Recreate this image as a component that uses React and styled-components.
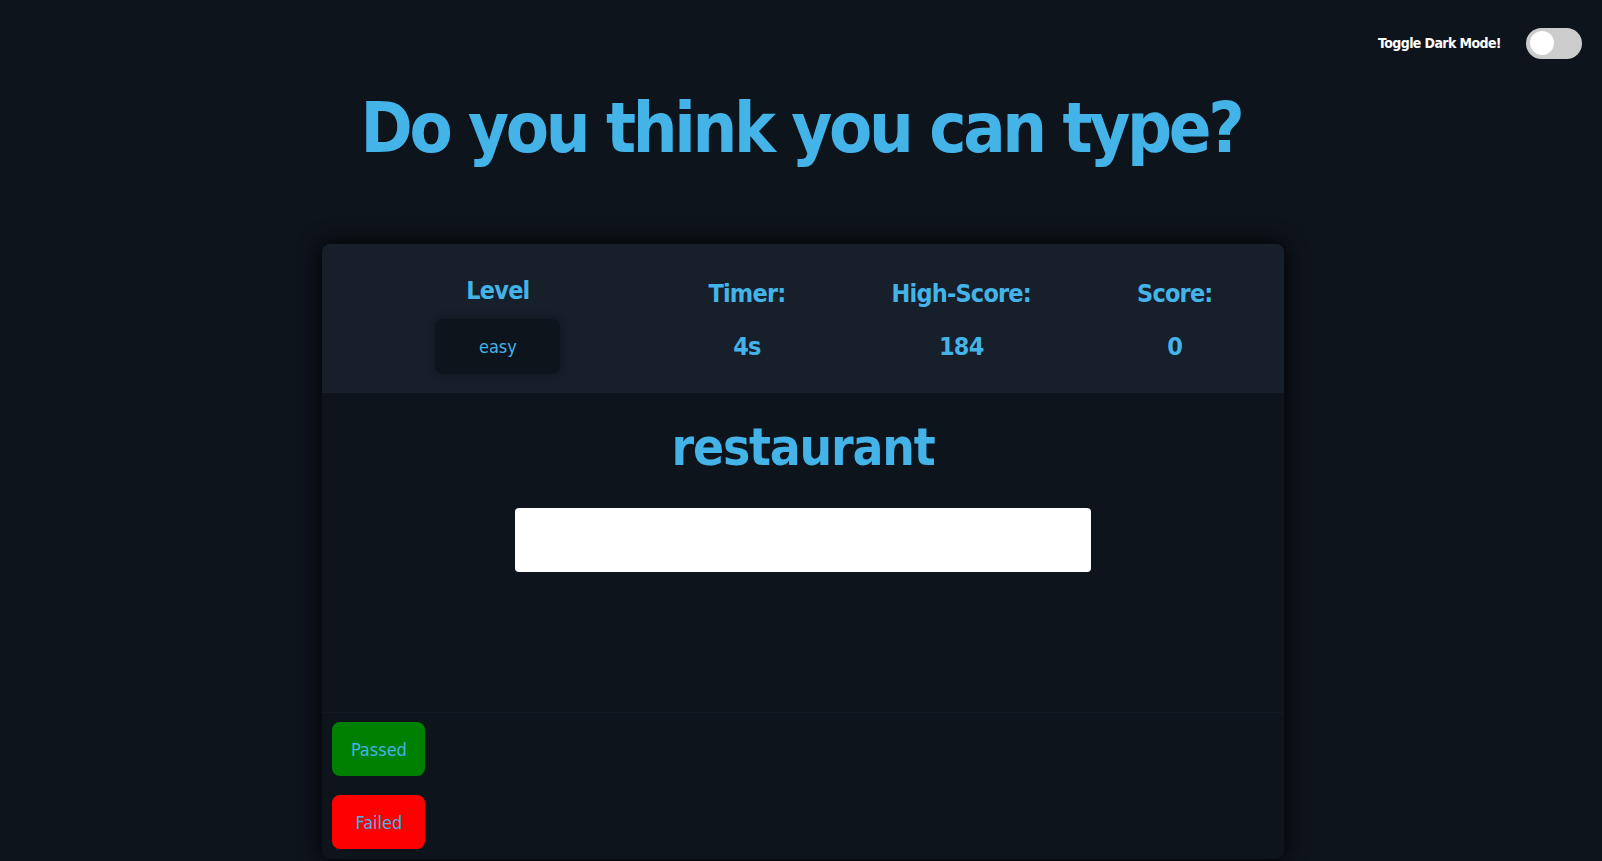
import React, { useState } from 'react'
import styled, { createGlobalStyle } from 'styled-components';

const GlobalStyle = createGlobalStyle`
    body {
        margin: 0;
        background: #0e141c;
        font-family: 'DejaVu Sans Condensed', 'DejaVu Sans', sans-serif;
    }
`

const Page = styled.div`
    min-height: 861px;
    padding-top: 27px;
    box-sizing: border-box;
`

const TopBar = styled.div`
    display: flex;
    justify-content: flex-end;
    align-items: center;
    gap: 25px;
    height: 32px;
    padding-right: 20px;
    span {
        color: #fff;
        font-weight: bold;
        font-size: 14px;
        letter-spacing: -0.6px;
    }
`

const Switch = styled.button`
    width: 56px;
    height: 31px;
    border: none;
    border-radius: 16px;
    background: #cccccc;
    padding: 0 4px;
    display: flex;
    align-items: center;
    justify-content: ${props => (props.on ? 'flex-end' : 'flex-start')};
    cursor: pointer;
    &::before {
        content: '';
        width: 24px;
        height: 24px;
        border-radius: 50%;
        background: #fff;
    }
`

const Title = styled.h1`
    margin: 29px 0 0;
    text-align: center;
    color: #43b3e8;
    font-size: 70px;
    line-height: 80px;
    font-weight: bold;
    letter-spacing: -3.3px;
`

const Card = styled.div`
    width: 60%;
    margin: 76px 0 0 calc(20% + 2px);
    border-radius: 8px;
    overflow: hidden;
    background: #0e141c;
    box-shadow: 0 0 22px #000;
`

const Header = styled.div`
    display: flex;
    justify-content: space-around;
    align-items: flex-start;
    height: 149px;
    box-sizing: border-box;
    padding: 30px 18px 0;
    background: #161f2a;
`

const Stat = styled.div`
    display: flex;
    flex-direction: column;
    align-items: center;
    gap: ${props => props.wide ? '11px' : '13px'};
    min-width: ${props => props.wide ? '209px' : '0'};
    h3 {
        margin: 0;
        color: #43b3e8;
        font-size: 25px;
        line-height: ${props => props.wide ? '34px' : '40px'};
        letter-spacing: -0.8px;
    }
`

const LevelSelect = styled.div`
    width: 125px;
    height: 55px;
    border-radius: 8px;
    background: #0e141c;
    box-shadow: 0 0 10px rgba(0, 0, 0, 0.3);
    display: flex;
    align-items: center;
    justify-content: center;
    color: #43b3e8;
    font-size: 18px;
`

const Body = styled.div`
    height: 319px;
    display: flex;
    flex-direction: column;
    align-items: center;
    h2 {
        margin: 20px 0 0;
        color: #43b3e8;
        font-size: 51px;
        line-height: 70px;
        letter-spacing: -1.2px;
    }
`

const Input = styled.input`
    margin-top: 25px;
    width: 60%;
    height: 64px;
    box-sizing: border-box;
    border: none;
    border-radius: 4px;
    background: #fff;
    outline: none;
`

const Footer = styled.div`
    border-top: 1px solid #121922;
    padding: 9px 10px 10px;
    display: flex;
    flex-direction: column;
    align-items: flex-start;
    gap: 19px;
`

const ResultButton = styled.button`
    width: 93px;
    height: 54px;
    border: none;
    border-radius: 8px;
    background: ${props => props.bg};
    color: #43b3e8;
    font-family: inherit;
    font-size: 18px;
`

export default function App() {
    const [dark, setDark] = useState(false);

    return (
        <Page>
            <GlobalStyle />
            <TopBar>
                <span>Toggle Dark Mode!</span>
                <Switch on={dark ? 1 : 0} onClick={() => setDark(!dark)} />
            </TopBar>
            <Title>Do you think you can type?</Title>
            <Card>
                <Header>
                    <Stat wide>
                        <h3>Level</h3>
                        <LevelSelect>easy</LevelSelect>
                    </Stat>
                    <Stat>
                        <h3>Timer:</h3>
                        <h3>4s</h3>
                    </Stat>
                    <Stat>
                        <h3>High-Score:</h3>
                        <h3>184</h3>
                    </Stat>
                    <Stat>
                        <h3>Score:</h3>
                        <h3>0</h3>
                    </Stat>
                </Header>
                <Body>
                    <h2>restaurant</h2>
                    <Input type="text" />
                </Body>
                <Footer>
                    <ResultButton bg="#008000">Passed</ResultButton>
                    <ResultButton bg="#ff0000">Failed</ResultButton>
                </Footer>
            </Card>
        </Page>
    )
}
